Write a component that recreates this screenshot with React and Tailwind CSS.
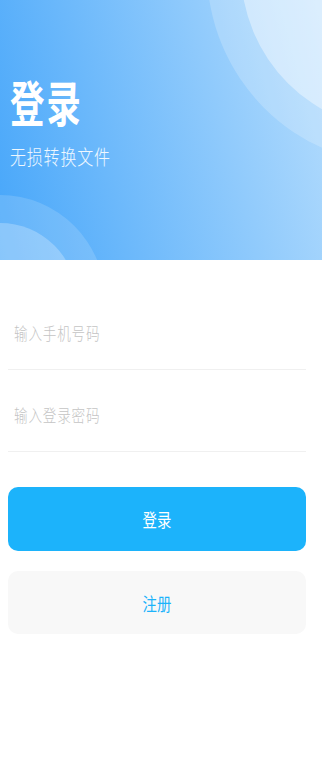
import React from "react";

const font = { fontFamily: '"Noto Sans CJK SC", "Noto Sans", sans-serif' };

export default function App() {
  return (
    <div className="w-[322px] h-[782px] bg-white overflow-hidden" style={font}>
      <div className="relative h-[260px] overflow-hidden bg-linear-[75deg] from-[#46a6fa] to-[#b6ddfd]">
        <div className="absolute left-[207px] top-[-225px] w-[390px] h-[390px] rounded-full bg-white/20" />
        <div className="absolute left-[241px] top-[-190px] w-[320px] h-[320px] rounded-full bg-white/40" />
        <div className="absolute left-[-105px] top-[195px] w-[210px] h-[210px] rounded-full bg-white/15" />
        <div className="absolute left-[-77px] top-[223px] w-[154px] h-[154px] rounded-full bg-white/25" />
        <div className="relative pl-[10px] pt-[76px]">
          <h1 className="inline-block origin-left scale-x-[0.7] text-[49px] leading-none font-semibold text-white tracking-[3px]">
            登录
          </h1>
          <div className="mt-[19px]">
            <span className="inline-block origin-left scale-x-[0.8] text-[20px] leading-none font-light text-white/90 tracking-[1px]">
              无损转换文件
            </span>
          </div>
        </div>
      </div>

      <div className="pl-[8px] pr-[16px] pt-[28px]">
        <div className="h-[82px] border-b border-[#f0f0f0] flex items-center pt-[8px] pl-[6px] overflow-hidden">
          <input
            className="w-[122%] shrink-0 origin-left scale-x-[0.8] text-[17px] font-light tracking-[1px] outline-none bg-transparent placeholder:text-[#c4c4c4] text-[#333]"
            placeholder="输入手机号码"
            style={font}
          />
        </div>
        <div className="h-[82px] border-b border-[#f0f0f0] flex items-center pt-[8px] pl-[6px] overflow-hidden">
          <input
            type="password"
            className="w-[122%] shrink-0 origin-left scale-x-[0.8] text-[17px] font-light tracking-[1px] outline-none bg-transparent placeholder:text-[#c4c4c4] text-[#333]"
            placeholder="输入登录密码"
            style={font}
          />
        </div>

        <button className="mt-[35px] w-full h-[64px] rounded-[10px] bg-[#1cb3fb] flex items-center justify-center">
          <span className="inline-block scale-x-[0.8] text-[18px] text-white leading-none" style={font}>登录</span>
        </button>
        <button className="mt-[20px] w-full h-[63px] rounded-[10px] bg-[#f8f8f8] flex items-center justify-center">
          <span className="inline-block scale-x-[0.8] text-[18px] text-[#1cb3fb] leading-none" style={font}>注册</span>
        </button>
      </div>
    </div>
  );
}
